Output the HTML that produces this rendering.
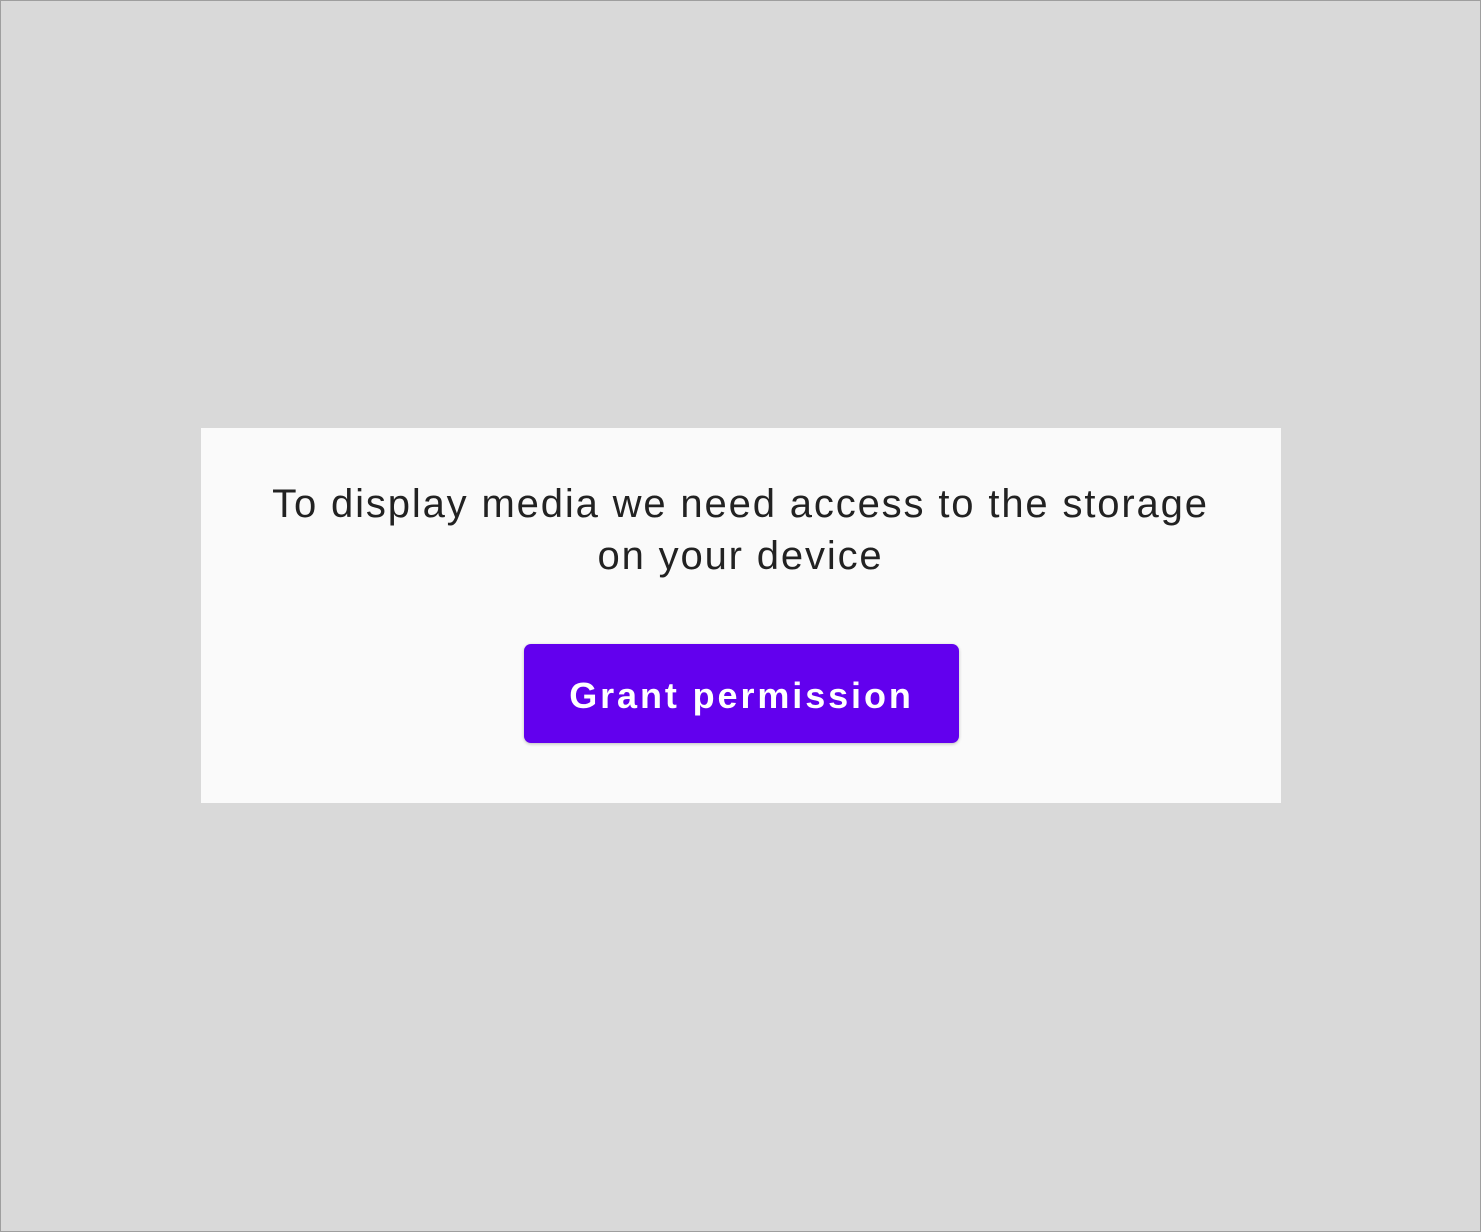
<!DOCTYPE html>
<html><head><style>
html,body{margin:0;padding:0}
body{width:1481px;height:1232px;background:#d9d9d9;position:relative;overflow:hidden;font-family:"Liberation Sans",sans-serif}
.frame{position:absolute;left:0;top:0;width:1479px;height:1230px;border:1px solid #9e9e9e}
.card{position:absolute;left:201px;top:428px;width:1080px;height:375px;background:#fafafa}
.txt{position:absolute;left:0;right:0;top:478px;text-align:center;font-size:40px;line-height:52px;color:#222;letter-spacing:1.85px}
.btn{position:absolute;left:524px;top:644px;width:435px;height:99px;background:#6200ee;border-radius:7px;box-shadow:0 1px 3px rgba(0,0,0,.25);color:#fff;font-size:36px;font-weight:bold;letter-spacing:2.9px;text-align:center;line-height:103px}
</style></head><body>
<div class="frame"></div>
<div class="card"></div>
<div class="txt">To display media we need access to the storage<br>on your device</div>
<div class="btn">Grant permission</div>
</body></html>
